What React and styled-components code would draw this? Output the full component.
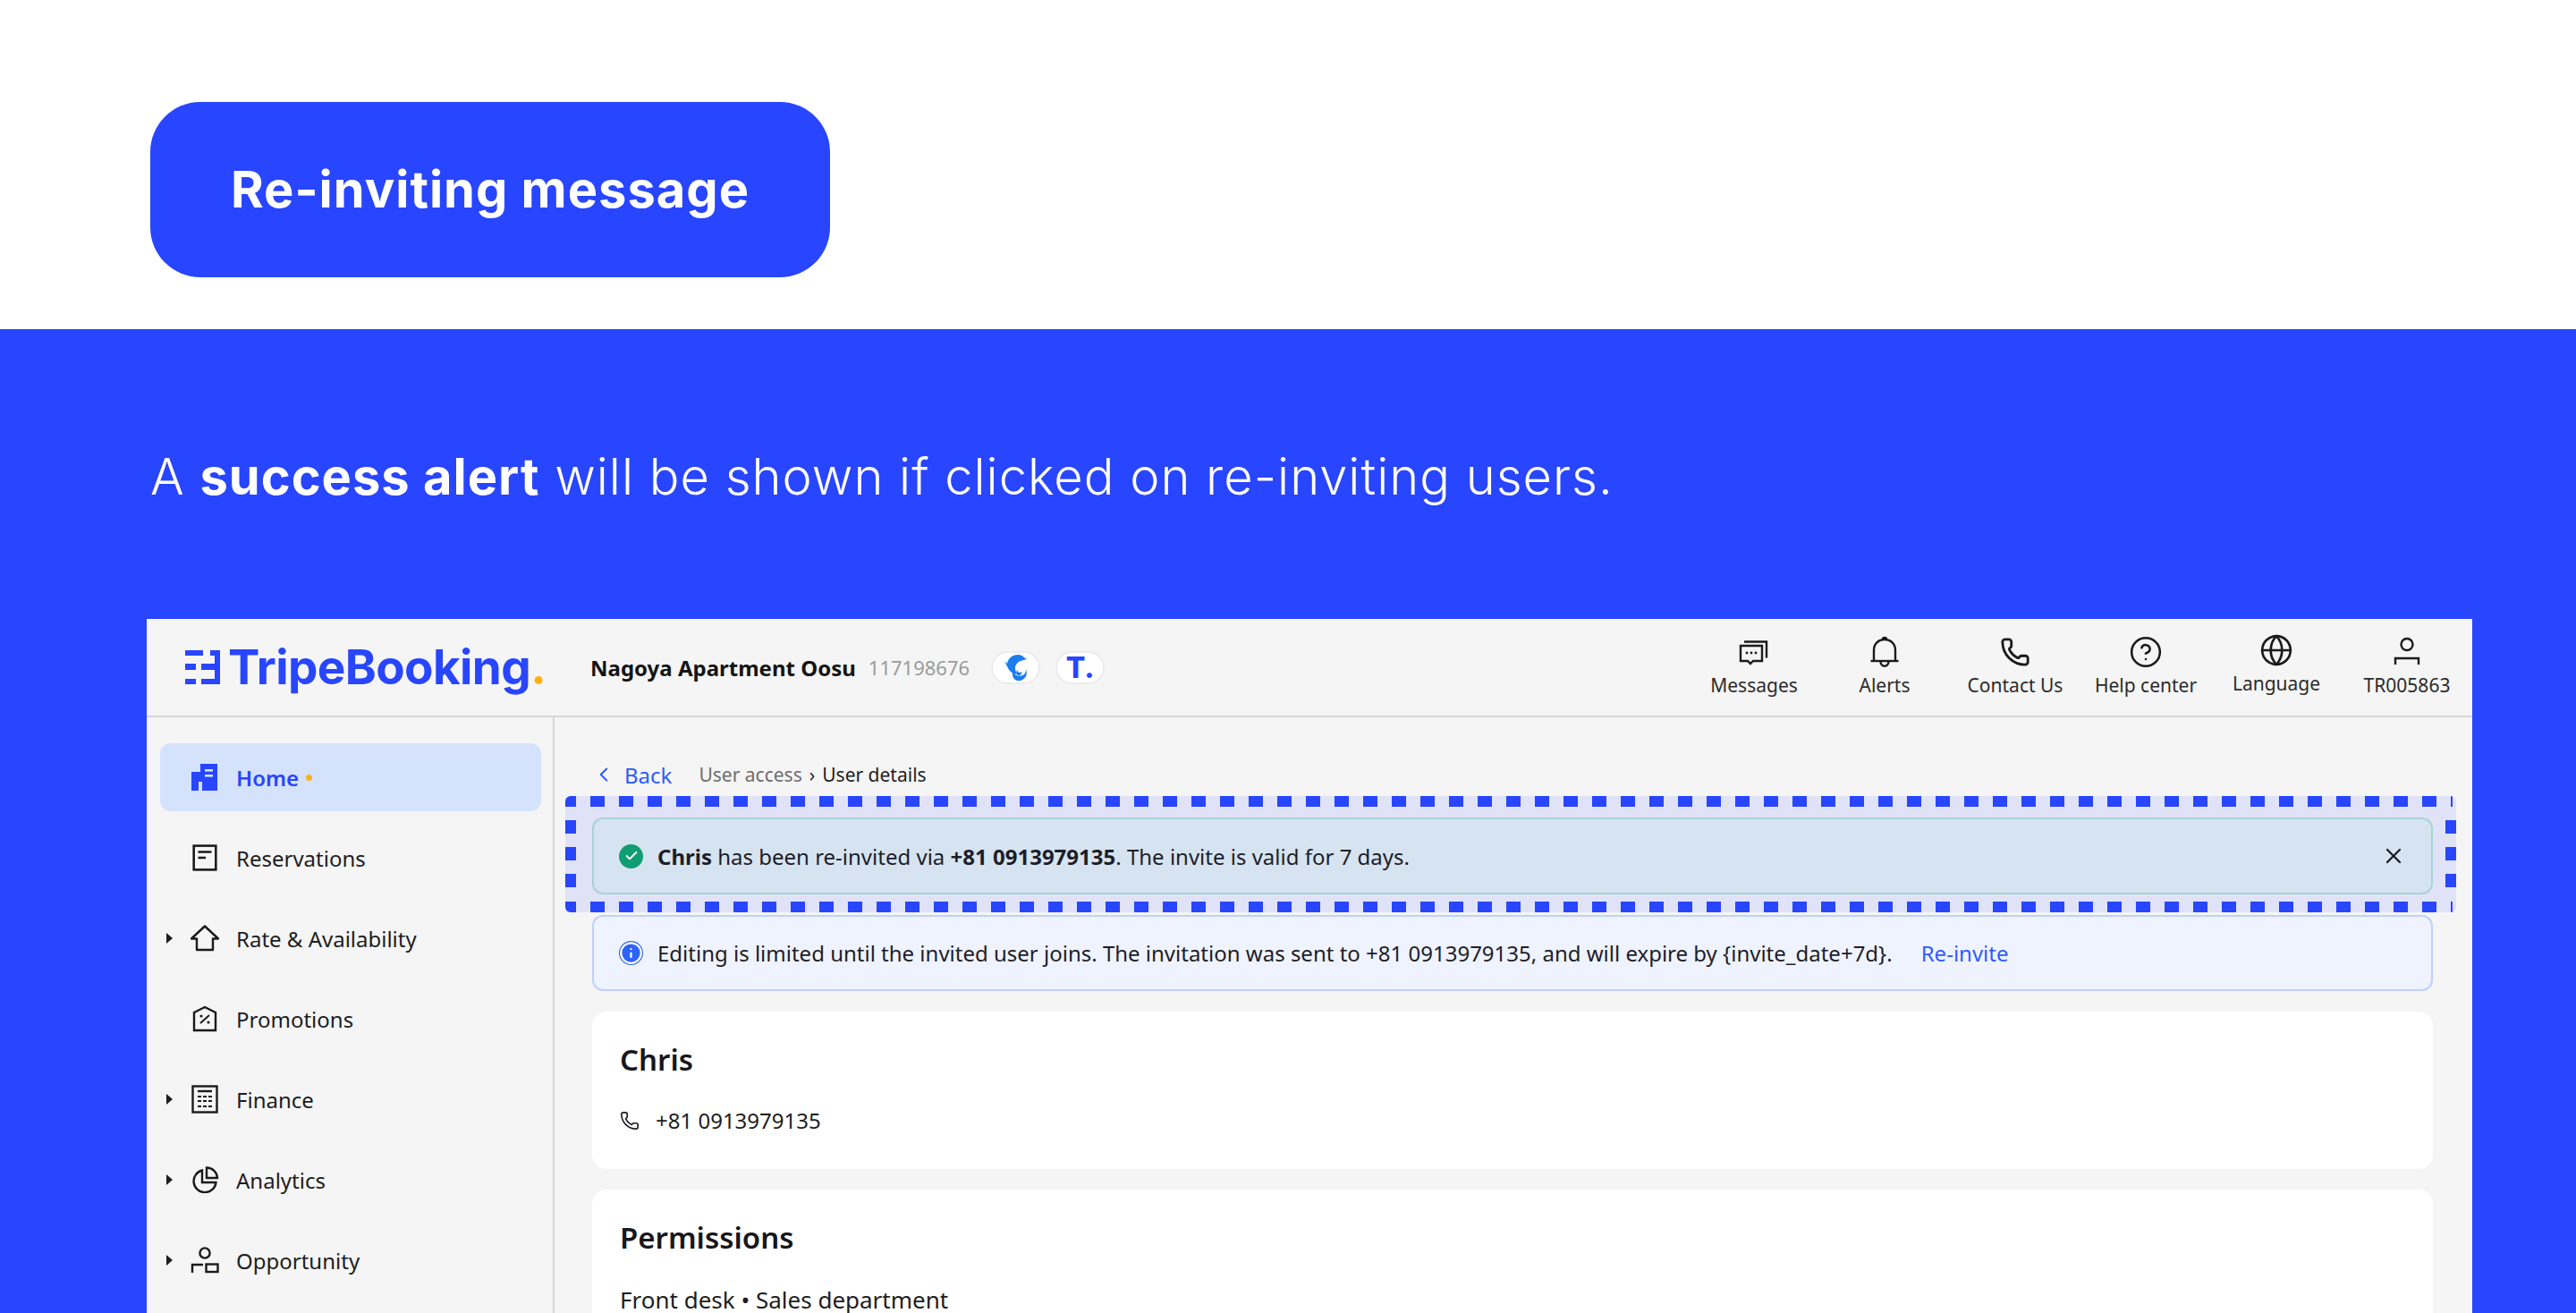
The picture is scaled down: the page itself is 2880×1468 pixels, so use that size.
import styled, { createGlobalStyle } from "styled-components";
import { Phone, CircleHelp, Globe, X, Check, ChevronLeft, Info } from "lucide-react";

const GlobalStyle = createGlobalStyle`
  html, body {
    margin: 0;
    padding: 0;
    background: #fff;
  }
  * {
    box-sizing: border-box;
  }
`;

const BLUE = "#2845ff";

const MessagesIcon = () => (
  <svg width="34" height="34" viewBox="0 0 34 34" fill="none" stroke="#1a1a1a" strokeWidth="2.4">
    <path d="M2 10h24v17H16l-3 3-3-3H2z" />
    <path d="M6 5.5h25v18" />
    <circle cx="9" cy="18" r="1.4" fill="#1a1a1a" stroke="none" />
    <circle cx="14" cy="18" r="1.4" fill="#1a1a1a" stroke="none" />
    <circle cx="19" cy="18" r="1.4" fill="#1a1a1a" stroke="none" />
  </svg>
);

const BellIcon = () => (
  <svg width="34" height="36" viewBox="0 0 34 36" fill="none" stroke="#1a1a1a" strokeWidth="2.4">
    <path d="M1.5 28h31" />
    <path d="M5 28V16C5 9 10 4 17 4s12 5 12 12v12" />
    <path d="M15 3.5c0-2 4-2 4 0" />
    <path d="M12.5 28.5c0 7 9 7 9 0" />
  </svg>
);

const UserIcon = () => (
  <svg width="30" height="34" viewBox="0 0 30 34" fill="none" stroke="#1a1a1a" strokeWidth="2.4">
    <circle cx="15" cy="8.5" r="6.5" />
    <path d="M2 31v-7h26v7" />
  </svg>
);

const HomeIcon = () => (
  <svg width="30" height="32" viewBox="0 0 30 32" fill={BLUE}>
    <path d="M10 1h19v30H0V10h10z" />
    <rect x="15" y="7" width="9" height="2.6" fill="#d4e2fc" />
    <rect x="15" y="13" width="9" height="2.6" fill="#d4e2fc" />
    <rect x="8" y="21" width="4" height="10" fill="#d4e2fc" />
  </svg>
);

const ReservationsIcon = () => (
  <svg width="30" height="30" viewBox="0 0 26 28" fill="none" stroke="#1a1a1a" strokeWidth="2.4">
    <rect x="1.5" y="1.5" width="23" height="25" />
    <path d="M6 8h14M6 14h8" />
  </svg>
);

const RateIcon = () => (
  <svg width="32" height="30" viewBox="0 0 32 30" fill="none" stroke="#1a1a1a" strokeWidth="2.4">
    <path d="M1 15.5 16 1.5l15 14h-6V28H7V15.5z" strokeLinejoin="round" />
  </svg>
);

const PromotionsIcon = () => (
  <svg width="28" height="30" viewBox="0 0 28 30" fill="none" stroke="#1a1a1a" strokeWidth="2.4">
    <path d="M2 8 14 2l12 6v20H2z" />
    <path d="M19 11 9 20" strokeWidth="2" />
    <circle cx="10" cy="12" r="1.6" fill="#1a1a1a" stroke="none" />
    <circle cx="18" cy="19" r="1.6" fill="#1a1a1a" stroke="none" />
  </svg>
);

const FinanceIcon = () => (
  <svg width="30" height="32" viewBox="0 0 30 32" fill="none" stroke="#1a1a1a" strokeWidth="2.4">
    <rect x="1.5" y="1.5" width="27" height="29" />
    <path d="M7 7h16" />
    <path d="M7 13h16M7 18h16M7 24h16" strokeDasharray="4 2" strokeWidth="2.2" />
  </svg>
);

const AnalyticsIcon = () => (
  <svg width="32" height="30" viewBox="0 0 32 30" fill="none" stroke="#1a1a1a" strokeWidth="2.4">
    <path d="M13 4.5A12.5 12.5 0 1 0 28.5 18H13z" />
    <path d="M18 1.5A12 12 0 0 1 30 13H18z" />
  </svg>
);

const OpportunityIcon = () => (
  <svg width="32" height="30" viewBox="0 0 32 30" fill="none" stroke="#1a1a1a" strokeWidth="2.4">
    <circle cx="16" cy="7" r="5.6" />
    <path d="M2 29v-9h12" />
    <rect x="17.5" y="19.5" width="13" height="8.5" />
  </svg>
);

const LogoMark = () => (
  <svg width="40" height="38" viewBox="0 0 40 38" fill={BLUE}>
    <rect x="0" y="0" width="20" height="6" />
    <rect x="0" y="15" width="12" height="7" />
    <rect x="0" y="32" width="12" height="6" />
    <path d="M28 0h11v38H18v-6h15V22H18v-7h15V6h-5z" />
  </svg>
);

const DolphinIcon = () => (
  <svg width="28" height="32" viewBox="0 0 28 32" fill="#1a7df2">
    <path d="M4 12C5 6 10 2 16 2c3 0 5 1 7 3l3 2-4 1-3 1c-3 1-6 4-6 8 0 3 1 5 3 7-5 0-9-3-11-7L1 9z" />
    <path d="M10 21c3 5 9 6 13 3 1-1 2-3 2-6 2 6 0 11-6 13-6 1-10-3-9-10z" />
    <path d="M15 19c1 3 4 4 6 2-1 3-3 5-5 4-2-1-2-4-1-6z" />
  </svg>
);

const Page = styled.div`
  width: 100%;
  height: 1468px;
  overflow: hidden;
  background: #fff;
`;

const TopBand = styled.section`
  height: 368px;
  padding: 114px 0 0 168px;
`;

const Badge = styled.div`
  width: 760px;
  height: 196px;
  border-radius: 56px;
  background: ${BLUE};
  color: #fff;
  display: flex;
  align-items: center;
  justify-content: center;
  font-family: Inter, sans-serif;
  font-weight: 700;
  font-size: 56px;
  letter-spacing: 1px;
`;

const BlueBand = styled.section`
  background: ${BLUE};
  height: 1100px;
  padding: 130px 0 0 164px;
`;

const Headline = styled.h1`
  margin: 0 0 124px 4px;
  color: #fff;
  font-family: Inter, sans-serif;
  font-weight: 300;
  font-size: 56px;
  line-height: 70px;
  letter-spacing: 1px;
  b {
    font-weight: 700;
  }
`;

const Panel = styled.div`
  width: 2600px;
  background: #f5f5f5;
  font-family: "Noto Sans", sans-serif;
  color: #1d1d22;
`;

const Header = styled.header`
  height: 110px;
  border-bottom: 2px solid #d6d6d6;
  display: flex;
  align-items: center;
  padding-left: 43px;
`;

const Brand = styled.div`
  width: 453px;
  display: flex;
  align-items: center;
  gap: 8px;
`;

const BrandName = styled.span`
  font-family: Inter, sans-serif;
  font-weight: 700;
  font-size: 53px;
  line-height: 58px;
  letter-spacing: -0.6px;
  color: ${BLUE};
  i {
    font-style: normal;
    color: #ffb013;
  }
`;

const Hotel = styled.div`
  display: flex;
  align-items: center;
  flex: 1;
`;

const HotelName = styled.span`
  font-weight: 700;
  font-size: 24px;
  color: #141414;
  margin-right: 14px;
`;

const HotelId = styled.span`
  font-size: 22px;
  color: #9b9b9b;
  margin-right: 24px;
`;

const Pill = styled.div`
  width: 55px;
  height: 37px;
  border-radius: 19px;
  background: #fff;
  border: 2px solid #ececec;
  margin-right: 17px;
  display: flex;
  align-items: center;
  justify-content: center;
  color: ${BLUE};
  font-family: Inter, sans-serif;
  font-weight: 800;
  font-size: 32px;
`;

const Nav = styled.nav`
  display: grid;
  grid-template-columns: repeat(6, 146px);
`;

const NavCell = styled.div`
  display: flex;
  flex-direction: column;
  align-items: center;
  gap: 4px;
  transform: translateY(${({ $raised }) => ($raised ? "-2px" : "0")});
`;

const NavIcon = styled.div`
  height: 36px;
  display: flex;
  align-items: center;
  justify-content: center;
`;

const NavLabel = styled.span`
  font-size: 21px;
  line-height: 30px;
  color: #2b2b2b;
`;

const Body = styled.div`
  display: flex;
`;

const Sidebar = styled.aside`
  width: 456px;
  height: 680px;
  border-right: 2px solid #d6d6d6;
  padding: 29px 13px 0 15px;
  display: flex;
  flex-direction: column;
  gap: 14px;
`;

const SideItem = styled.div`
  height: 76px;
  flex: none;
  border-radius: 12px;
  display: flex;
  align-items: center;
  padding-left: 7px;
  background: ${({ $active }) => ($active ? "#d4e2fc" : "transparent")};
  color: ${({ $active }) => ($active ? BLUE : "#1d1d22")};
  font-weight: ${({ $active }) => ($active ? 600 : 400)};
  font-size: 24px;
`;

const CaretSlot = styled.div`
  width: 28px;
  flex: none;
`;

const Caret = styled.div`
  width: 0;
  height: 0;
  border-left: 7px solid #1d1d22;
  border-top: 6px solid transparent;
  border-bottom: 6px solid transparent;
`;

const SideIcon = styled.div`
  width: 32px;
  margin-left: -1px;
  flex: none;
  display: flex;
  align-items: center;
  justify-content: center;
`;

const SideLabel = styled.span`
  margin-left: 19px;
`;

const OrangeDot = styled.span`
  display: inline-block;
  width: 7px;
  height: 7px;
  border-radius: 50%;
  background: #ffb013;
  margin-left: 8px;
`;

const Main = styled.main`
  flex: 1;
  padding: 46px 0 0 12px;
`;

const Crumbs = styled.div`
  height: 36px;
  margin: 0 0 6px 30px;
  display: flex;
  align-items: center;
  font-size: 21px;
  color: #6d6d6d;
`;

const BackLink = styled.span`
  display: flex;
  align-items: center;
  gap: 10px;
  color: #2f5bff;
  font-size: 24px;
  margin-right: 30px;
`;

const CrumbArrow = styled.span`
  color: #1d1d22;
  margin: 0 8px;
`;

const CrumbCurrent = styled.span`
  color: #1d1d22;
`;

const Highlight = styled.div`
  width: 2114px;
  height: 130px;
  padding: 24px 26px 20px 30px;
  margin-bottom: 3px;
  border-radius: 6px;
  background-color: #e0e3f7;
  background-repeat: no-repeat;
  background-image:
    repeating-linear-gradient(90deg, ${BLUE} 0 16px, transparent 16px 32px),
    repeating-linear-gradient(90deg, ${BLUE} 0 16px, transparent 16px 32px),
    repeating-linear-gradient(180deg, ${BLUE} 0 15px, transparent 15px 30px),
    repeating-linear-gradient(180deg, ${BLUE} 0 15px, transparent 15px 30px);
  background-size: 100% 12px, 100% 12px, 12px 76px, 12px 76px;
  background-position: -4px 0, -4px 100%, 0 27px, 100% 27px;
`;

const Alert = styled.div`
  height: ${({ $tall }) => ($tall ? "85px" : "86px")};
  border-radius: 12px;
  border: 2px solid ${({ $tone }) => ($tone === "success" ? "#a9d3d6" : "#bfd0fb")};
  background: ${({ $tone }) => ($tone === "success" ? "#d6e4f1" : "#eff3ff")};
  display: flex;
  align-items: center;
  padding-left: 28px;
  font-size: 24px;
  color: #1d1d2a;
  b {
    font-weight: 700;
  }
`;

const AlertIcon = styled.div`
  width: 27px;
  height: 27px;
  border-radius: 50%;
  flex: none;
  margin-right: 16px;
  background: ${({ $tone }) => ($tone === "success" ? "#0f9d72" : "#2f62f6")};
  display: flex;
  align-items: center;
  justify-content: center;
`;

const AlertText = styled.div`
  flex: 1;
`;

const CloseButton = styled.div`
  width: 28px;
  height: 28px;
  margin-right: 28px;
  display: flex;
  align-items: center;
  justify-content: center;
`;

const ReInvite = styled.span`
  color: #2f5bff;
  margin-left: 32px;
`;

const MainColumn = styled.div`
  width: 2058px;
  margin-left: 30px;
  display: flex;
  flex-direction: column;
  gap: 23px;
`;

const Card = styled.section`
  background: #fff;
  border-radius: 16px;
  height: ${({ $h }) => $h}px;
  padding: 31px;
`;

const CardTitle = styled.h2`
  margin: 0 0 28px;
  font-size: 33px;
  line-height: 46px;
  font-weight: 600;
  color: #17171c;
`;

const PhoneRow = styled.div`
  display: flex;
  align-items: center;
  gap: 18px;
  font-size: 24px;
  line-height: 34px;
`;

const PermissionText = styled.div`
  font-size: 26px;
  line-height: 36px;
`;

const sideItems = [
  { label: "Reservations", Icon: ReservationsIcon },
  { label: "Rate & Availability", Icon: RateIcon, caret: true },
  { label: "Promotions", Icon: PromotionsIcon },
  { label: "Finance", Icon: FinanceIcon, caret: true },
  { label: "Analytics", Icon: AnalyticsIcon, caret: true },
  { label: "Opportunity", Icon: OpportunityIcon, caret: true },
];

export default function App() {
  return (
    <Page>
      <GlobalStyle />
      <TopBand>
        <Badge>Re-inviting message</Badge>
      </TopBand>
      <BlueBand>
        <Headline>
          A <b>success alert</b> will be shown if clicked on re-inviting users.
        </Headline>
        <Panel>
          <Header>
            <Brand>
              <LogoMark />
              <BrandName>
                TripeBooking<i>.</i>
              </BrandName>
            </Brand>
            <Hotel>
              <HotelName>Nagoya Apartment Oosu</HotelName>
              <HotelId>117198676</HotelId>
              <Pill>
                <DolphinIcon />
              </Pill>
              <Pill>T.</Pill>
            </Hotel>
            <Nav>
              <NavCell>
                <NavIcon>
                  <MessagesIcon />
                </NavIcon>
                <NavLabel>Messages</NavLabel>
              </NavCell>
              <NavCell>
                <NavIcon>
                  <BellIcon />
                </NavIcon>
                <NavLabel>Alerts</NavLabel>
              </NavCell>
              <NavCell>
                <NavIcon>
                  <Phone size={34} strokeWidth={2} color="#1a1a1a" />
                </NavIcon>
                <NavLabel>Contact Us</NavLabel>
              </NavCell>
              <NavCell>
                <NavIcon>
                  <CircleHelp size={38} strokeWidth={1.6} color="#1a1a1a" />
                </NavIcon>
                <NavLabel>Help center</NavLabel>
              </NavCell>
              <NavCell $raised>
                <NavIcon>
                  <Globe size={38} strokeWidth={1.7} color="#1a1a1a" />
                </NavIcon>
                <NavLabel>Language</NavLabel>
              </NavCell>
              <NavCell>
                <NavIcon>
                  <UserIcon />
                </NavIcon>
                <NavLabel>TR005863</NavLabel>
              </NavCell>
            </Nav>
          </Header>
          <Body>
            <Sidebar>
              <SideItem $active>
                <CaretSlot />
                <SideIcon>
                  <HomeIcon />
                </SideIcon>
                <SideLabel>Home</SideLabel>
                <OrangeDot />
              </SideItem>
              {sideItems.map(({ label, Icon, caret }) => (
                <SideItem key={label}>
                  <CaretSlot>{caret && <Caret />}</CaretSlot>
                  <SideIcon>
                    <Icon />
                  </SideIcon>
                  <SideLabel>{label}</SideLabel>
                </SideItem>
              ))}
            </Sidebar>
            <Main>
              <Crumbs>
                <BackLink>
                  <ChevronLeft size={26} strokeWidth={1.8} />
                  Back
                </BackLink>
                User access
                <CrumbArrow>›</CrumbArrow>
                <CrumbCurrent>User details</CrumbCurrent>
              </Crumbs>
              <Highlight>
                <Alert $tone="success">
                  <AlertIcon $tone="success">
                    <Check size={16} strokeWidth={3} color="#fff" />
                  </AlertIcon>
                  <AlertText>
                    <b>Chris</b> has been re-invited via <b>+81 0913979135</b>. The invite is valid for 7 days.
                  </AlertText>
                  <CloseButton>
                    <X size={28} strokeWidth={2} color="#1d1d2a" />
                  </CloseButton>
                </Alert>
              </Highlight>
              <MainColumn>
                <Alert $tone="info" $tall>
                  <AlertIcon $tone="info">
                    <Info size={27} strokeWidth={2} color="#fff" fill="#2f62f6" />
                  </AlertIcon>
                  <AlertText>
                    Editing is limited until the invited user joins. The invitation was sent to +81 0913979135, and will expire by {"{invite_date+7d}"}.
                    <ReInvite>Re-invite</ReInvite>
                  </AlertText>
                </Alert>
                <Card $h={176}>
                  <CardTitle>Chris</CardTitle>
                  <PhoneRow>
                    <Phone size={22} strokeWidth={1.8} color="#1d1d22" />
                    +81 0913979135
                  </PhoneRow>
                </Card>
                <Card $h={260}>
                  <CardTitle>Permissions</CardTitle>
                  <PermissionText>Front desk • Sales department</PermissionText>
                </Card>
              </MainColumn>
            </Main>
          </Body>
        </Panel>
      </BlueBand>
    </Page>
  );
}
